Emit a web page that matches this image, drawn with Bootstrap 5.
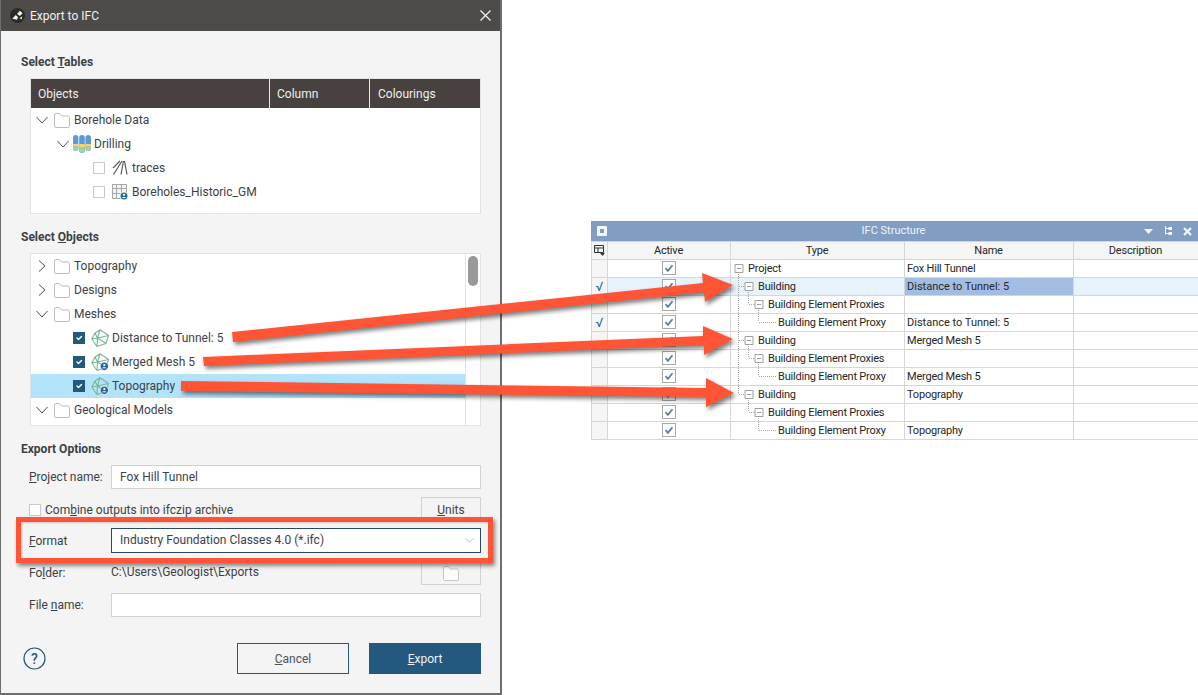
<!DOCTYPE html>
<html lang="en">
<head>
<meta charset="UTF-8">
<title>Export to IFC</title>
<link href="https://cdn.jsdelivr.net/npm/bootstrap@5.3.0/dist/css/bootstrap.min.css" rel="stylesheet">
<script src="https://cdn.jsdelivr.net/npm/bootstrap@5.3.0/dist/js/bootstrap.bundle.min.js"></script>
<style>
html, body { margin: 0; background: #fff; font-family: Roboto, "Liberation Sans", sans-serif; font-size: 12px; color: #3c4146; overflow: hidden; }
.stage { width: 1198px; height: 695px; }
.dialog { width: 502px; height: 695px; background: #f4f4f4; border: solid #6e6e6e; border-width: 0 2px 2px 1px; flex: none; }
.dlg-title { height: 31px; background: #4d4a48; color: #f2f2f2; font-size: 12px; padding: 0 9px 0 9px; }
.dlg-title-txt { margin-left: 5px; }
.dlg-body { padding: 22px 19px 0 20px; }
.sect { font-weight: 700; line-height: 18px; height: 16px; font-size: 12px; }
.sect-2 { margin-top: 14px; }
.box { background: #fff; border: 1px solid #e2e2e2; margin-left: 9px; }
.box-tables { height: 136px; margin-top: 9px; }
.box-objects { height: 173px; margin-top: 9px; }
.box-head { height: 29px; background: #47423f; color: #f0f0f0; }
.box-head > div { padding: 1px 0 0 7px; line-height: 28px; border-right: 1px solid #e8e8e8; }
.hc-1 { width: 239px; }
.hc-2 { width: 100px; }
.hc-3 { flex: 1; border-right: 0 !important; padding-left: 8px !important; }
.tree-row { height: 24px; padding-left: 5px; white-space: nowrap; }
.tree-row.sel { background: #b3e3fb; }
.pad-d1 { padding-left: 26px; }
.pad-d2 { padding-left: 62px; }
.pad-m { padding-left: 42px; }
.chev { width: 12px; height: 12px; margin-right: 6px; flex: none; }
.pad-d1 .chev { margin-right: 4px; }
.ic-folder { width: 16px; height: 15px; margin-right: 4px; flex: none; }
.ic-drill { width: 18px; height: 18px; margin-right: 3px; flex: none; }
.ic-mesh { width: 18px; height: 18px; margin-right: 3px; margin-left: -1px; flex: none; }
.ic-small { width: 16px; height: 16px; margin-right: 4px; flex: none; }
.tree-main { flex: 1; min-width: 0; }
.gutter { width: 15px; border-left: 1px solid #e2e2e2; flex: none; padding: 2px 0 0 2px; }
.thumb { width: 10px; height: 30px; background: #999; border-radius: 5px; }
.form-check-input.tick { width: 12px; height: 12px; margin: 0 7px 0 0; border-radius: 0; border: 1px solid #c9c9c9; flex: none; background-color: #fff; box-shadow: none; }
.form-check-input.tick:checked { background-color: #24597f; border-color: #24597f; background-size: 10px; }
.form-check-input.tick.tick-plain { margin-right: 4px; }
.f-row { margin-left: 8px; }
.f-label { width: 82px; flex: none; }
.f-row .form-control, .f-row .form-select { height: 24px; min-height: 0; border-radius: 0; border: 1px solid #d2d2d2; font-size: 12px; padding: 0 8px; color: #3c4146; box-shadow: none; }
.f-row .form-select { height: 25px; border-color: #2a4a64; padding-bottom: 2px; background-position: right 5px center; background-size: 11px 9px; background-image: url("data:image/svg+xml,%3csvg xmlns='http://www.w3.org/2000/svg' viewBox='0 0 16 16'%3e%3cpath fill='none' stroke='%23b5b5b5' stroke-width='1.6' d='M1 4l7 7 7-7'/%3e%3c/svg%3e"); }
.mt-r1 { margin-top: 9px; }
.mt-r2 { margin-top: 8px; height: 25px; }
.mt-r3 { margin-top: 6px; position: relative; }
.mt-r4 { margin-top: 7px; height: 25px; }
.mt-r5 { margin-top: 8px; }
.side-btn { width: 60px; height: 25px; margin-left: auto; background: #f4f4f4; border: 1px solid #d2d2d2; border-radius: 0; font-size: 12px; padding: 0; color: #3c4146; }
.side-btn .ic-folder { opacity: .8; }
.path-txt { padding-bottom: 2px; }
.red-frame { position: absolute; left: -13px; right: -12px; top: -11px; bottom: -10px; border: 5px solid #ff5436; box-shadow: 2px 3px 4px rgba(0,0,0,.45), inset 1px 1px 2px rgba(0,0,0,.2); pointer-events: none; z-index: 2; }
.dlg-foot { margin-top: 26px; padding-left: 2px; }
.btn-dlg { width: 112px; height: 31px; border-radius: 0; font-size: 12px; padding: 0; }
.btn-cancel { background: #f4f4f4; border: 1px solid #24597f; color: #4f5357; margin-left: auto; margin-right: 20px; }
.btn-export { background: #24597f; border: 1px solid #24597f; color: #f2f2f2; }
.ic-help { width: 23px; height: 23px; }

.ifc { width: 607px; height: 219px; margin-left: 89px; margin-top: 221px; position: relative; flex: none; font-size: 11px; color: #262626; }
.ifc-title { height: 20px; background: #829dc2; color: #f1f4f8; padding: 0 6px; position: relative; }
.ifc-title-txt { flex: 1; text-align: center; padding-left: 36px; }
.tb-gap { margin-right: 11px; }
.ifc-table { table-layout: fixed; width: 607px; margin: 0; border-color: #d6d6d6; font-size: 11px; letter-spacing: -.2px; --bs-table-color: #262626; --bs-table-bg: #fff; }
.ifc-table col:nth-child(1) { width: 16px; }
.ifc-table col:nth-child(2) { width: 123px; }
.ifc-table col:nth-child(3) { width: 174px; }
.ifc-table col:nth-child(4) { width: 169px; }
.ifc-table col:nth-child(5) { width: 125px; }
.ifc-table th, .ifc-table td { height: 18px; padding: 0 2px; line-height: 16px; vertical-align: middle; white-space: nowrap; border-color: #d6d6d6; }
.ifc-table th { background: #f5f5f5; font-weight: 400; text-align: center; --bs-table-bg: #f5f5f5; padding-right: 3px; }
.ifc-table td.hdr-cell { --bs-table-bg: #f5f5f5; text-align: center; color: #1f6b96; font-size: 13px; padding: 0; }
.ifc-table tr.cur td { --bs-table-bg: #e6f3fc; }
.ifc-table tr.cur td.hdr-cell { --bs-table-bg: #f5f5f5; }
.ifc-table tr.cur td.cur-cell { --bs-table-bg: #a3bde2; }
.ifc-table td.wide-txt { letter-spacing: 0; }
.form-check-input.ifc-check { width: 14px; height: 14px; margin: 0; border-radius: 0; border: 1px solid #a8a8a8; box-shadow: none; float: none; display: inline-block; vertical-align: top; background-color: #fff; }
.form-check-input.ifc-check:checked { background-color: #fff; border-color: #a8a8a8; background-size: 12px; background-image: url("data:image/svg+xml,%3csvg xmlns='http://www.w3.org/2000/svg' viewBox='0 0 12 12'%3e%3cpath fill='none' stroke='%235f7d9c' stroke-width='1.8' d='M2.5 6.2l2.4 2.6 4.6-5.6'/%3e%3c/svg%3e"); }
.t0 { padding-left: 17px !important; }
.t1 { padding-left: 27px !important; }
.t2 { padding-left: 37px !important; }
.t3 { padding-left: 47px !important; }
.ifc-lines { position: absolute; left: 0; top: 0; width: 607px; height: 219px; pointer-events: none; }
.arrows { position: absolute; left: 0; top: 0; width: 1198px; height: 695px; pointer-events: none; z-index: 5; filter: drop-shadow(2px 3px 2px rgba(0,0,0,.5)); }
</style>
</head>
<body>
<svg width="0" height="0" class="d-block position-absolute">
  <symbol id="s-down" viewBox="0 0 12 12"><path d="M.5 3l5.5 6 5.5-6" fill="none" stroke="#4b4f53" stroke-width="1"/></symbol>
  <symbol id="s-right" viewBox="0 0 12 12"><path d="M3 .5l6 5.500-6 5.500" fill="none" stroke="#4b4f53" stroke-width="1"/></symbol>
  <symbol id="s-folder" viewBox="0 0 16 15"><path d="M.5 13V2A1.500 1.500 0 0 1 2 .5h3.500L7.500 3H14A1.500 1.500 0 0 1 15.500 4.500V13A1.500 1.500 0 0 1 14 14.500H2A1.500 1.500 0 0 1 .5 13z" fill="#fff" stroke="#bdbdbd"/></symbol>
  <symbol id="s-drill" viewBox="0 0 18 18">
    <rect x="0" y="0" width="5.400" height="16" rx="2.700" fill="#5b9bd5"/><rect x="0" y="9" width="5.400" height="2.500" fill="#f5d565"/><path d="M0 11.500h5.400v1.800a2.700 2.700 0 0 1-5.400 0z" fill="#a0d0b0"/>
    <rect x="6.200" y="0" width="5.600" height="18" rx="2.800" fill="#5b9bd5"/><rect x="6.200" y="9" width="5.600" height="3" fill="#f5d565"/><path d="M6.200 12h5.600v3.200a2.800 2.800 0 0 1-5.600 0z" fill="#a0d0b0"/>
    <rect x="12.400" y="0" width="5.600" height="16" rx="2.800" fill="#5b9bd5"/><rect x="12.400" y="9" width="5.600" height="2.500" fill="#f5d565"/><path d="M12.400 11.500H18v1.700a2.800 2.800 0 0 1-5.600 0z" fill="#a0d0b0"/>
  </symbol>
  <symbol id="s-traces" viewBox="0 0 16 16"><path d="M1 8l7-7M1.500 14.500L10 1M9 14.500L11.500 1M15 14.500L12.500 1" fill="none" stroke="#55595d" stroke-width="1.200"/></symbol>
  <symbol id="s-grid" viewBox="0 0 16 16">
    <path d="M0 0h15v15H0z" fill="#a9a9a9"/>
    <path d="M1 1h3v3H1zM5 1h4v3H5zM10 1h4v3h-4zM1 5h3v4H1zM5 5h4v4H5zM10 5h4v4h-4zM1 10h3v4H1zM5 10h4v4H5z" fill="#f3f3f3"/>
    <circle cx="12" cy="12" r="4" fill="#2b6a94" stroke="#fff" stroke-width=".8"/><circle cx="12" cy="10.800" r="1.100" fill="#fff"/><path d="M10 14c.4-1.400 3.600-1.400 4 0z" fill="#fff"/>
  </symbol>
  <symbol id="s-mesh" viewBox="0 0 18 18"><path d="M9 .8l8.500 5.700L15 14.500 6 17.500.8 10 4 4zM9 .8L6.500 9 .8 10M6.500 9l11-2.500M6.500 9L15 14.500M6.500 9L6 17.500M4 4l2.500 5" fill="none" stroke="#78b799" stroke-width="1.100" stroke-linejoin="round"/></symbol>
  <symbol id="s-mesh-b" viewBox="0 0 18 18"><path d="M9 .8l8.500 5.700L15 14.500 6 17.500.8 10 4 4zM9 .8L6.500 9 .8 10M6.500 9l11-2.500M6.500 9L15 14.500M6.500 9L6 17.500M4 4l2.500 5" fill="none" stroke="#78b799" stroke-width="1.100" stroke-linejoin="round"/><circle cx="13.300" cy="13.300" r="4.200" fill="#2b6a94" stroke="#fff" stroke-width=".8"/><circle cx="13.300" cy="12" r="1.100" fill="#fff"/><path d="M11.200 15.300c.4-1.400 3.800-1.400 4.200 0z" fill="#fff"/></symbol>
</svg>

<div class="stage d-flex position-relative">
  <!-- export dialog -->
  <div class="dialog d-flex flex-column">
    <div class="dlg-title d-flex align-items-center">
      <svg width="15" height="15" viewBox="0 0 16 16" class="flex-none"><circle cx="8" cy="8" r="8" fill="#2c2a29"/><path d="M2.500 11.500L6 7.500l2.500 2-1 3zM7.500 6.500L10.500 3l3 2.500-3 3zM10 11l3-2-.5 3z" fill="#f2f2f2"/></svg>
      <span class="dlg-title-txt">Export to IFC</span>
      <svg width="11" height="11" viewBox="0 0 11 11" class="ms-auto"><path d="M.5.500l10 10M10.500.500l-10 10" stroke="#f2f2f2" stroke-width="1.300"/></svg>
    </div>
    <div class="dlg-body">
      <div class="sect">Select <u>T</u>ables</div>
      <div class="box box-tables">
        <div class="box-head d-flex">
          <div class="hc-1">Objects</div><div class="hc-2">Column</div><div class="hc-3">Colourings</div>
        </div>
        <div class="tree-row d-flex align-items-center"><svg class="chev"><use href="#s-down"/></svg><svg class="ic-folder"><use href="#s-folder"/></svg>Borehole Data</div>
        <div class="tree-row pad-d1 d-flex align-items-center"><svg class="chev"><use href="#s-down"/></svg><svg class="ic-drill"><use href="#s-drill"/></svg>Drilling</div>
        <div class="tree-row pad-d2 d-flex align-items-center"><input class="form-check-input tick" type="checkbox"><svg class="ic-small"><use href="#s-traces"/></svg>traces</div>
        <div class="tree-row pad-d2 d-flex align-items-center"><input class="form-check-input tick" type="checkbox"><svg class="ic-small"><use href="#s-grid"/></svg>Boreholes_Historic_GM</div>
      </div>

      <div class="sect sect-2">Select <u>O</u>bjects</div>
      <div class="box box-objects d-flex">
        <div class="tree-main">
          <div class="tree-row d-flex align-items-center"><svg class="chev"><use href="#s-right"/></svg><svg class="ic-folder"><use href="#s-folder"/></svg>Topography</div>
          <div class="tree-row d-flex align-items-center"><svg class="chev"><use href="#s-right"/></svg><svg class="ic-folder"><use href="#s-folder"/></svg>Designs</div>
          <div class="tree-row d-flex align-items-center"><svg class="chev"><use href="#s-down"/></svg><svg class="ic-folder"><use href="#s-folder"/></svg>Meshes</div>
          <div class="tree-row pad-m d-flex align-items-center"><input class="form-check-input tick" type="checkbox" checked><svg class="ic-mesh"><use href="#s-mesh"/></svg>Distance to Tunnel: 5</div>
          <div class="tree-row pad-m d-flex align-items-center"><input class="form-check-input tick" type="checkbox" checked><svg class="ic-mesh"><use href="#s-mesh-b"/></svg>Merged Mesh 5</div>
          <div class="tree-row sel pad-m d-flex align-items-center"><input class="form-check-input tick" type="checkbox" checked><svg class="ic-mesh"><use href="#s-mesh-b"/></svg>Topography</div>
          <div class="tree-row d-flex align-items-center"><svg class="chev"><use href="#s-down"/></svg><svg class="ic-folder"><use href="#s-folder"/></svg>Geological Models</div>
        </div>
        <div class="gutter"><div class="thumb"></div></div>
      </div>

      <div class="sect sect-2">Export Options</div>
      <div class="f-row mt-r1 d-flex align-items-center">
        <label class="f-label"><u>P</u>roject name:</label>
        <input class="form-control" type="text" value="Fox Hill Tunnel">
      </div>
      <div class="f-row mt-r2 d-flex align-items-center">
        <input class="form-check-input tick tick-plain" type="checkbox">
        <span>Com<u>b</u>ine outputs into ifczip archive</span>
        <button class="btn side-btn" type="button"><u>U</u>nits</button>
      </div>
      <div class="f-row mt-r3 d-flex align-items-center">
        <label class="f-label"><u>F</u>ormat</label>
        <select class="form-select"><option>Industry Foundation Classes 4.0 (*.ifc)</option></select>
        <div class="red-frame"></div>
      </div>
      <div class="f-row mt-r4 d-flex align-items-center">
        <label class="f-label">Fo<u>l</u>der:</label>
        <span class="path-txt">C:\Users\Geologist\Exports</span>
        <button class="btn side-btn" type="button"><svg class="ic-folder m-0"><use href="#s-folder"/></svg></button>
      </div>
      <div class="f-row mt-r5 d-flex align-items-center">
        <label class="f-label">File <u>n</u>ame:</label>
        <input class="form-control" type="text">
      </div>
      <div class="dlg-foot d-flex align-items-center">
        <svg class="ic-help" viewBox="0 0 23 23"><circle cx="11.500" cy="11.500" r="10.500" fill="none" stroke="#24597f" stroke-width="1.200"/><text x="11.500" y="16.500" text-anchor="middle" font-family="Roboto, sans-serif" font-size="14" font-weight="500" fill="#24597f">?</text></svg>
        <button class="btn btn-dlg btn-cancel" type="button"><u>C</u>ancel</button>
        <button class="btn btn-dlg btn-export" type="button"><u>E</u>xport</button>
      </div>
    </div>
  </div>

  <!-- IFC structure panel -->
  <div class="ifc">
    <div class="ifc-title d-flex align-items-center">
      <svg width="10" height="10" viewBox="0 0 10 10"><rect width="10" height="10" rx="1" fill="#f3f5f9"/><rect x="3" y="3" width="4" height="4" fill="#829dc2"/></svg>
      <span class="ifc-title-txt">IFC Structure</span>
      <svg width="9" height="5" viewBox="0 0 9 5" class="tb-gap"><path d="M0 0h9L4.500 5z" fill="#f3f5f9"/></svg>
      <svg width="8" height="10" viewBox="0 0 8 10" class="tb-gap"><path d="M1.500 0v8.500M1.500 2.500H5M1.500 7.500H5" stroke="#f3f5f9" fill="none"/><rect x="4.500" y="1" width="3.500" height="3" fill="#f3f5f9"/><rect x="4.500" y="6" width="3.500" height="3" fill="#f3f5f9"/></svg>
      <svg width="9" height="9" viewBox="0 0 9 9"><path d="M1 1l7 7M8 1L1 8" stroke="#f3f5f9" stroke-width="2.200"/></svg>
    </div>
    <table class="table table-bordered ifc-table">
      <colgroup><col><col><col><col><col></colgroup>
      <thead>
        <tr>
          <th class="p-0"><svg width="11" height="11" viewBox="0 0 11 11" class="d-block mx-auto"><path d="M.5.500h9v7h-9zM.5 3h9M4 3v4.500" fill="none" stroke="#333"/><path d="M6 8h5L8.500 11z" fill="#333"/></svg></th>
          <th>Active</th><th>Type</th><th>Name</th><th>Description</th>
        </tr>
      </thead>
      <tbody>
        <tr><td class="hdr-cell"></td><td class="text-center"><input class="form-check-input ifc-check" type="checkbox" checked></td><td class="t0">Project</td><td>Fox Hill Tunnel</td><td></td></tr>
        <tr class="cur"><td class="hdr-cell">√</td><td class="text-center"><input class="form-check-input ifc-check" type="checkbox" checked></td><td class="t1">Building</td><td class="cur-cell wide-txt">Distance to Tunnel: 5</td><td></td></tr>
        <tr><td class="hdr-cell"></td><td class="text-center"><input class="form-check-input ifc-check" type="checkbox" checked></td><td class="t2">Building Element Proxies</td><td></td><td></td></tr>
        <tr><td class="hdr-cell">√</td><td class="text-center"><input class="form-check-input ifc-check" type="checkbox" checked></td><td class="t3">Building Element Proxy</td><td class="wide-txt">Distance to Tunnel: 5</td><td></td></tr>
        <tr><td class="hdr-cell"></td><td class="text-center"><input class="form-check-input ifc-check" type="checkbox" checked></td><td class="t1">Building</td><td>Merged Mesh 5</td><td></td></tr>
        <tr><td class="hdr-cell"></td><td class="text-center"><input class="form-check-input ifc-check" type="checkbox" checked></td><td class="t2">Building Element Proxies</td><td></td><td></td></tr>
        <tr><td class="hdr-cell"></td><td class="text-center"><input class="form-check-input ifc-check" type="checkbox" checked></td><td class="t3">Building Element Proxy</td><td>Merged Mesh 5</td><td></td></tr>
        <tr><td class="hdr-cell"></td><td class="text-center"><input class="form-check-input ifc-check" type="checkbox" checked></td><td class="t1">Building</td><td>Topography</td><td></td></tr>
        <tr><td class="hdr-cell"></td><td class="text-center"><input class="form-check-input ifc-check" type="checkbox" checked></td><td class="t2">Building Element Proxies</td><td></td><td></td></tr>
        <tr><td class="hdr-cell"></td><td class="text-center"><input class="form-check-input ifc-check" type="checkbox" checked></td><td class="t3">Building Element Proxy</td><td>Topography</td><td></td></tr>
      </tbody>
    </table>
    <svg class="ifc-lines" viewBox="591 221 607 219" id="treeLines"></svg>
  </div>

  <!-- callout arrows -->
  <svg class="arrows" viewBox="0 0 1198 695">
    <path fill="#ff5436" d="M232 332L703 283L702 273L733 285L705 302L704 292L233 342z"/>
    <path fill="#ff5436" d="M203 357L703 336L703 326L733 339L704 355L704 345L204 366z"/>
    <path fill="#ff5436" d="M181 381L706 388L706 378L734 393L706 407L706 397L181 391z"/>
  </svg>
</div>

<script>
    // Dotted connector lines and minus boxes of the Type tree
    const svgNS = 'http://www.w3.org/2000/svg';
    const lines = document.getElementById('treeLines');
    function line(x1, y1, x2, y2) {
        const l = document.createElementNS(svgNS, 'line');
        [['x1', x1], ['y1', y1], ['x2', x2], ['y2', y2]].forEach(a => l.setAttribute(a[0], a[1]));
        l.setAttribute('stroke', '#a8a8a8');
        l.setAttribute('stroke-dasharray', '1 1');
        lines.appendChild(l);
    }
    function minus(x, y) {
        const g = document.createElementNS(svgNS, 'path');
        g.setAttribute('d', `M${x - 3.5} ${y - 3.5}h8v8h-8zM${x - 1.5} ${y + .5}h4`);
        g.setAttribute('fill', '#fff');
        g.setAttribute('stroke', '#a0a0a0');
        lines.appendChild(g);
    }
    line(738.5, 272, 738.5, 394);
    [286, 340, 394].forEach(y => {
        line(739, y + .5, 745, y + .5);
        line(748.5, y + 4, 748.5, y + 18);
        line(749, y + 18.5, 755, y + 18.5);
        line(758.5, y + 22, 758.5, y + 36);
        line(759, y + 36.5, 777, y + 36.5);
    });
    minus(738.5, 268);
    [286, 340, 394].forEach(y => {
        minus(748.5, y);
        minus(758.5, y + 18);
    });
</script>
</body>
</html>
